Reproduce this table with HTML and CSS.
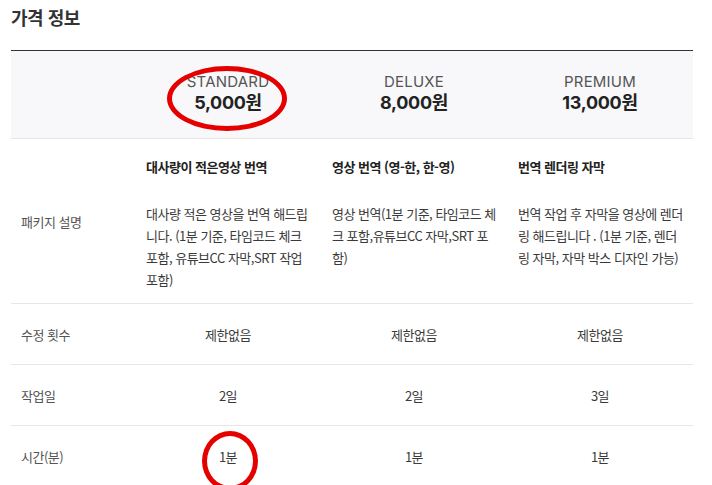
FILE: index.html
```html
<!DOCTYPE html>
<html lang="ko">
<head>
  <meta charset="UTF-8">
  <title>가격 정보</title>
  <link rel="stylesheet" href="styles.css">
</head>
<body>
  <div class="page">
    <h2 class="title">가격 정보</h2>

    <table class="price-table">
      <colgroup>
        <col class="label-col">
        <col>
        <col>
        <col>
      </colgroup>
      <!-- 패키지 이름 / 가격 -->
      <tr class="head-row">
        <th></th>
        <th><div class="plan">STANDARD</div><div class="price">5,000원</div></th>
        <th><div class="plan">DELUXE</div><div class="price">8,000원</div></th>
        <th><div class="plan">PREMIUM</div><div class="price">13,000원</div></th>
      </tr>

      <!-- 패키지 설명 -->
      <tr class="desc-row">
        <td class="label">패키지 설명</td>
        <td class="desc">
          <div class="desc-title">대사량이 적은영상 번역</div>
          <div class="desc-text">대사량 적은 영상을 번역 해드립니다. (1분 기준, 타임코드 체크 포함, 유튜브CC 자막,SRT 작업 포함)</div>
        </td>
        <td class="desc">
          <div class="desc-title">영상 번역 (영-한, 한-영)</div>
          <div class="desc-text">영상 번역(1분 기준, 타임코드 체크 포함,유튜브CC 자막,SRT 포함)</div>
        </td>
        <td class="desc">
          <div class="desc-title">번역 렌더링 자막</div>
          <div class="desc-text">번역 작업 후 자막을 영상에 렌더링 해드립니다 . (1분 기준, 렌더링 자막, 자막 박스 디자인 가능)</div>
        </td>
      </tr>

      <tr class="row">
        <td class="label">수정 횟수</td>
        <td>제한없음</td>
        <td>제한없음</td>
        <td>제한없음</td>
      </tr>

      <tr class="row">
        <td class="label">작업일</td>
        <td>2일</td>
        <td>2일</td>
        <td>3일</td>
      </tr>

      <tr class="row">
        <td class="label">시간(분)</td>
        <td>1분</td>
        <td>1분</td>
        <td>1분</td>
      </tr>
    </table>

    <!-- 빨간 표시 -->
    <div class="mark mark-plan"></div>
    <div class="mark mark-time"></div>
  </div>
</body>
</html>
```

FILE: styles.css
```css
body {
  margin: 0;
  background: white;
  font-family: "Noto Sans CJK KR", "Noto Sans", sans-serif;
  color: #333;
}

.page {
  position: relative;
  padding: 0 19px 0 11px;
}

.title {
  margin: 4px 0 20px;
  font-size: 18px;
  line-height: 26px;
  font-weight: 700;
  color: #333;
  letter-spacing: -0.5px;
}

.price-table {
  width: 682px;
  border-collapse: collapse;
  table-layout: fixed;
  border-top: 1px solid #333;
  font-size: 13px;
  letter-spacing: -0.5px;
}

.label-col {
  width: 124px;
}

.price-table td,
.price-table th {
  padding: 0 11px;
  border-bottom: 1px solid #e6e6e6;
  text-align: center;
  color: #3a3a3a;
}

.price-table .label {
  text-align: left;
  padding-left: 10px;
  color: #555;
}

.head-row th {
  background: #f8f8fa;
  padding-top: 21px;
  padding-bottom: 24px;
  font-weight: 400;
  letter-spacing: 0;
}

.plan {
  font-family: Inter, "Noto Sans", sans-serif;
  font-size: 15px;
  line-height: 20px;
  color: #555;
  letter-spacing: 0.2px;
}

.price {
  font-family: Inter, "Noto Sans CJK KR", sans-serif;
  font-size: 18px;
  line-height: 22px;
  font-weight: 700;
  color: #222;
  letter-spacing: -0.3px;
}

.desc-row td {
  vertical-align: middle;
}

.desc-row .desc {
  vertical-align: top;
  text-align: left;
  padding: 17px 7px 12px 11px;
}

.desc-title {
  line-height: 22px;
  font-weight: 700;
  color: #222;
}

.desc-text {
  margin-top: 25px;
  line-height: 22px;
  color: #3a3a3a;
}

.row td {
  height: 60px;
}

.mark {
  position: absolute;
  border: 5px solid #e50000;
  border-radius: 50%;
  box-sizing: border-box;
}

.mark-plan {
  left: 167px;
  top: 62px;
  width: 120px;
  height: 65px;
}

.mark-time {
  left: 202px;
  top: 427px;
  width: 56px;
  height: 60px;
}
```
